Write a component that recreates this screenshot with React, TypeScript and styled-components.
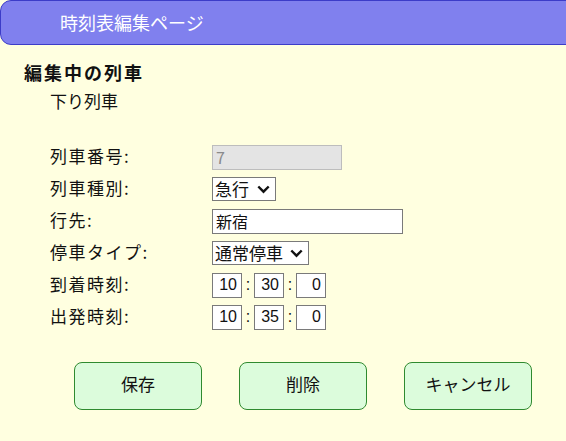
import styled, { createGlobalStyle } from "styled-components";

const GlobalStyle = createGlobalStyle`
  html, body {
    margin: 0;
    padding: 0;
    background: #ffffe0;
    overflow: hidden;
  }
  body {
    font-family: "Noto Sans CJK JP", "Noto Sans", sans-serif;
    color: #111;
  }
`;

type Field = {
  label: string;
  kind: "readonly" | "select" | "text" | "time";
  value?: string;
  width?: number;
  time?: string[];
};

const fields: Field[] = [
  { label: "列車番号:", kind: "readonly", value: "7", width: 130 },
  { label: "列車種別:", kind: "select", value: "急行", width: 64 },
  { label: "行先:", kind: "text", value: "新宿", width: 191 },
  { label: "停車タイプ:", kind: "select", value: "通常停車", width: 97 },
  { label: "到着時刻:", kind: "time", time: ["10", "30", "0"] },
  { label: "出発時刻:", kind: "time", time: ["10", "35", "0"] },
];

const Chevron = () => (
  <ChevronIcon width="13" height="9" viewBox="0 0 13 9">
    <path d="M1.3 1.5 L6.5 6.7 L11.7 1.5" fill="none" stroke="#111" strokeWidth="2.4" />
  </ChevronIcon>
);

const App = () => {
  return (
    <Page>
      <GlobalStyle />
      <Header>時刻表編集ページ</Header>
      <SectionTitle>編集中の列車</SectionTitle>
      <Direction>下り列車</Direction>
      <Form>
        {fields.map((f) => (
          <Row key={f.label}>
            <Label>{f.label}</Label>
            {f.kind === "readonly" && (
              <TextBox $width={f.width} $disabled readOnly value={f.value} />
            )}
            {f.kind === "text" && (
              <TextBox $width={f.width} readOnly value={f.value} />
            )}
            {f.kind === "select" && (
              <SelectBox $width={f.width}>
                <span>{f.value}</span>
                <Chevron />
              </SelectBox>
            )}
            {f.kind === "time" && (
              <TimeGroup>
                <TimeBox readOnly value={f.time![0]} />
                <Colon>:</Colon>
                <TimeBox readOnly value={f.time![1]} />
                <Colon>:</Colon>
                <TimeBox readOnly value={f.time![2]} />
              </TimeGroup>
            )}
          </Row>
        ))}
      </Form>
      <Buttons>
        <Button>保存</Button>
        <Button>削除</Button>
        <Button>キャンセル</Button>
      </Buttons>
    </Page>
  );
};

export default App;

const Page = styled.div`
  width: 566px;
  height: 441px;
  overflow: hidden;
`;

const Header = styled.div`
  box-sizing: border-box;
  width: 590px;
  height: 45px;
  background: #8080ee;
  border: 1px solid #3c3cc8;
  border-radius: 11px 0 0 11px;
  color: #fff;
  font-size: 18px;
  display: flex;
  align-items: center;
  padding-left: 59px;
  padding-bottom: 2px;
`;

const SectionTitle = styled.div`
  margin-top: 15px;
  padding-left: 24px;
  font-size: 18px;
  font-weight: 700;
  letter-spacing: 2px;
  line-height: 24px;
`;

const Direction = styled.div`
  margin-top: 5px;
  padding-left: 50px;
  font-size: 17px;
  line-height: 24px;
`;

const Form = styled.div`
  margin-top: 31px;
  padding-left: 50px;
  display: flex;
  flex-direction: column;
  gap: 7px;
`;

const Row = styled.div`
  display: grid;
  grid-template-columns: 162px auto;
  align-items: center;
  height: 25px;
`;

const Label = styled.div`
  font-size: 17px;
  letter-spacing: 1.5px;
  line-height: 24px;
  padding-bottom: 2px;
`;

const TextBox = styled.input<{ $width?: number; $disabled?: boolean }>`
  box-sizing: border-box;
  width: ${(p) => p.$width}px;
  height: 25px;
  margin: 0;
  padding: 0 3px;
  font-family: inherit;
  font-size: 16px;
  color: ${(p) => (p.$disabled ? "#8a8a8a" : "#111")};
  background: ${(p) => (p.$disabled ? "#e4e4e4" : "#fff")};
  border: 1px solid ${(p) => (p.$disabled ? "#bdbdbd" : "#7a7a7a")};
  border-radius: 0;
  outline: none;
`;

const SelectBox = styled.div<{ $width?: number }>`
  position: relative;
  box-sizing: border-box;
  width: ${(p) => p.$width}px;
  height: 24px;
  background: #fff;
  border: 1px solid #7a7a7a;
  font-size: 17px;
  line-height: 22px;
  padding-left: 2px;
`;

const ChevronIcon = styled.svg`
  position: absolute;
  right: 5px;
  top: 7px;
`;

const TimeGroup = styled.div`
  display: flex;
  align-items: center;
`;

const TimeBox = styled.input`
  box-sizing: border-box;
  width: 30px;
  height: 25px;
  margin: 0;
  padding: 0 4px 0 0;
  text-align: right;
  font-family: "Liberation Sans", Arial, sans-serif;
  font-size: 16px;
  color: #111;
  background: #fff;
  border: 1px solid #7a7a7a;
  outline: none;
`;

const Colon = styled.span`
  width: 12px;
  text-align: center;
  font-family: "Liberation Sans", Arial, sans-serif;
  font-size: 16px;
`;

const Buttons = styled.div`
  margin-top: 33px;
  padding-left: 74px;
  display: flex;
  gap: 37px;
`;

const Button = styled.button`
  box-sizing: border-box;
  width: 128px;
  height: 48px;
  background: #dcfcdc;
  border: 1.5px solid #2f8a2f;
  border-radius: 8px;
  font-family: inherit;
  font-size: 17px;
  color: #111;
  padding: 0 0 6px;
  cursor: pointer;
`;
